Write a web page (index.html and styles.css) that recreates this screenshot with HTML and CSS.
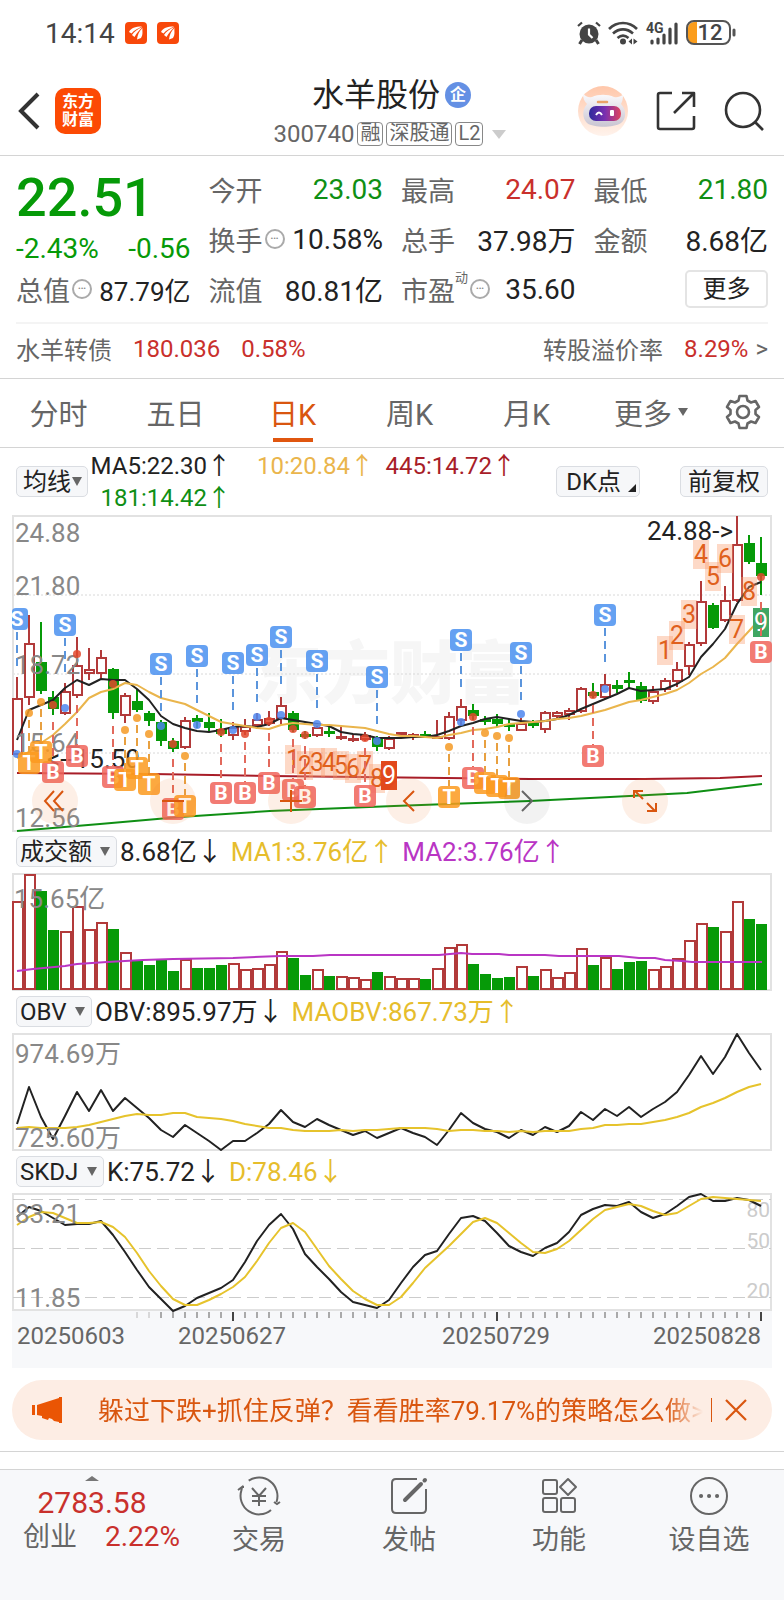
FILE: index.html
```html
<!DOCTYPE html>
<html lang="zh-CN">
<head>
  <meta charset="UTF-8" />
  <meta name="viewport" content="width=device-width, initial-scale=1" />
  <title>水羊股份 300740</title>
  <link rel="stylesheet" href="styles.css">
</head>
<body>

  <!-- Status bar -->
  <div class="status">
    <span class="clock">14:14</span>
    <svg class="app-dot" viewBox="0 0 22 22" aria-hidden="true">
      <rect width="22" height="22" rx="4" fill="#f8480a"/>
      <path d="M4 10C6 6 10 4.500 17 4.500C13 6.500 9 8 6.500 11.500Z M7 13C9 10 12 7 17.500 5C14.500 8 11.500 11 9.500 15Z M12 17.500C12.500 13 14 9 17.500 6C17 9 18.500 12 16 16Z" fill="#fff"/>
    </svg>
    <svg class="app-dot" viewBox="0 0 22 22" aria-hidden="true">
      <rect width="22" height="22" rx="4" fill="#f8480a"/>
      <path d="M4 10C6 6 10 4.500 17 4.500C13 6.500 9 8 6.500 11.500Z M7 13C9 10 12 7 17.500 5C14.500 8 11.500 11 9.500 15Z M12 17.500C12.500 13 14 9 17.500 6C17 9 18.500 12 16 16Z" fill="#fff"/>
    </svg>
    <span class="spacer"></span>
    <svg width="24" height="24" viewBox="0 0 24 24" aria-hidden="true">
      <circle cx="12" cy="13" r="9.500" fill="#444"/>
      <path d="M1 5L5 1.500M23 5L19 1.500" stroke="#444" stroke-width="2.200" fill="none"/>
      <path d="M5 19L2.500 23M19 19L21.500 23" stroke="#444" stroke-width="3" fill="none"/>
      <path d="M12 7.500V13.500L15.500 17" stroke="#fff" stroke-width="2.200" fill="none"/>
    </svg>
    <svg width="30" height="24" viewBox="0 0 30 24" aria-hidden="true">
      <g fill="none" stroke="#444" stroke-width="2.600">
        <path d="M1 8C9 0 21 0 29 8"/>
        <path d="M5 12.500C11 7 19 7 25 12.500"/>
        <path d="M9.500 17C13 14 17 14 20.500 17"/>
      </g>
      <circle cx="15" cy="20.500" r="3" fill="#444"/>
      <path d="M20.500 20.500L24 17.500V23.500ZM25.500 17.500L29.500 20.500L25.500 23.500Z" fill="#444"/>
    </svg>
    <svg class="signal" width="34" height="24" viewBox="0 0 34 24" aria-hidden="true">
      <text x="1" y="12" class="net">4G</text>
      <path d="M7 20V22M13 18V22M19 14V22M25 8V22M31 3V22" stroke="#444" stroke-width="3.200" stroke-linecap="round" fill="none"/>
    </svg>
    <svg width="50" height="26" viewBox="0 0 50 26" aria-hidden="true">
      <path d="M8 2H11V24H8A6 6 0 0 1 2 18V8A6 6 0 0 1 8 2Z" fill="#fb9d1c"/>
      <rect x="1" y="1" width="43" height="23" rx="7" fill="none" stroke="#555" stroke-width="2"/>
      <path d="M48 10V15" stroke="#555" stroke-width="3" stroke-linecap="round"/>
      <text x="24" y="20" class="batt">12</text>
    </svg>
  </div>

  <!-- Header -->
  <header class="top">
    <div class="top-left">
      <button class="plain" type="button" aria-label="返回">
        <svg width="24" height="38" viewBox="0 0 24 38"><path d="M22 2L5 19L22 36" fill="none" stroke="#333" stroke-width="4"/></svg>
      </button>
      <a href="#" class="logo" aria-label="东方财富"><span>东方</span><span>财富</span></a>
    </div>
    <div class="top-title">
      <h1>水羊股份<span class="corp">企</span></h1>
      <p class="code">300740<span class="tag">融</span><span class="tag">深股通</span><span class="tag">L2</span><i class="tri tri-light"></i></p>
    </div>
    <div class="top-right">
      <button class="plain" type="button" aria-label="智能助手">
        <svg width="50" height="50" viewBox="0 0 50 50">
          <defs>
            <linearGradient id="halo" x1="0" y1="0" x2="0" y2="1"><stop offset="0" stop-color="#ffc7aa"/><stop offset="1" stop-color="#fff3ec"/></linearGradient>
            <linearGradient id="shell" x1="0" y1="0" x2="0" y2="1"><stop offset="0" stop-color="#fbfafc"/><stop offset="1" stop-color="#c9c5d2"/></linearGradient>
            <linearGradient id="visor" x1="0" y1="0" x2="1" y2="0"><stop offset="0" stop-color="#2d2a9c"/><stop offset=".5" stop-color="#7a2fb0"/><stop offset="1" stop-color="#e0445c"/></linearGradient>
          </defs>
          <circle cx="25" cy="25" r="25" fill="url(#halo)"/>
          <path d="M5 8C8 10 10 12 14 11C20 8 30 8 36 11C40 12 42 10 45 9C45 14 44 16 43 18C49 24 48 34 43 37C35 42 16 42 9 37C4 32 4 24 9 18C6 15 5 12 5 8Z" fill="url(#shell)"/>
          <path d="M20 16H29" stroke="#e9a268" stroke-width="2.500" stroke-linecap="round"/>
          <rect x="11" y="20" width="32" height="15" rx="7" fill="url(#visor)"/>
          <path d="M18 29Q21 24 24 29" fill="none" stroke="#fff" stroke-width="2"/>
          <rect x="32" y="24" width="4" height="6" rx="1" fill="#fff"/>
        </svg>
      </button>
      <button class="plain" type="button" aria-label="分享">
        <svg width="40" height="40" viewBox="0 0 40 40" fill="none" stroke="#333" stroke-width="2.600" stroke-linejoin="round">
          <path d="M16 2H4Q2 2 2 4V36Q2 38 4 38H36Q38 38 38 36V25"/><path d="M18 22L38 2M26 2H38V16"/>
        </svg>
      </button>
      <button class="plain" type="button" aria-label="搜索">
        <svg width="40" height="40" viewBox="0 0 40 40" fill="none" stroke="#333" stroke-width="2.600"><circle cx="19" cy="19" r="17"/><path d="M31 31L39 39"/></svg>
      </button>
    </div>
  </header>

  <!-- Quote -->
  <section class="quote" aria-label="行情">
    <div class="quote-grid">
      <div class="price-box">
        <strong class="price">22.51</strong>
        <div class="change"><span>-2.43%</span><span>-0.56</span></div>
      </div>
      <div class="cell"><span class="k">今开</span><span class="v green">23.03</span></div>
      <div class="cell"><span class="k">最高</span><span class="v red">24.07</span></div>
      <div class="cell"><span class="k">最低</span><span class="v green">21.80</span></div>
      <div class="cell"><span class="k">换手<i class="more-dot">•••</i></span><span class="v">10.58%</span></div>
      <div class="cell"><span class="k">总手</span><span class="v">37.98万</span></div>
      <div class="cell"><span class="k">金额</span><span class="v">8.68亿</span></div>
      <div class="cell"><span class="k">总值<i class="more-dot">•••</i></span><span class="v v-fit">87.79亿</span></div>
      <div class="cell"><span class="k">流值</span><span class="v">80.81亿</span></div>
      <div class="cell"><span class="k">市盈<sup>动</sup><i class="more-dot">•••</i></span><span class="v">35.60</span></div>
      <div class="cell cell-end"><button class="more-btn" type="button">更多</button></div>
    </div>
    <a class="bond" href="#">
      <span>水羊转债</span><span class="red">180.036</span><span class="red">0.58%</span>
      <span class="bond-right">转股溢价率</span><span class="red">8.29%</span><span class="gt">&gt;</span>
    </a>
  </section>

  <!-- Period tabs -->
  <nav class="tabs" aria-label="周期">
    <button type="button">分时</button>
    <button type="button">五日</button>
    <button type="button" class="on">日K</button>
    <button type="button">周K</button>
    <button type="button">月K</button>
    <button type="button" class="tab-more">更多<i class="tri tri-small"></i></button>
    <button type="button" class="tab-gear" aria-label="设置">
      <svg width="36" height="36" viewBox="0 0 36 36" fill="none" stroke="#666" stroke-width="2.600" stroke-linejoin="round">
        <path d="M14.500 2H21.500L22.500 6.500L26 8.500L30.500 7L34 13L30.500 16V20L34 23L30.500 29L26 27.500L22.500 29.500L21.500 34H14.500L13.500 29.500L10 27.500L5.500 29L2 23L5.500 20V16L2 13L5.500 7L10 8.500L13.500 6.500Z"/>
        <circle cx="18" cy="18" r="6"/>
      </svg>
    </button>
  </nav>

  <main class="charts">
    <div class="ma-row">
      <label class="pick pick-tight"><select aria-label="主图指标"><option>均线</option></select></label>
      <div class="ma-list">
        <span>MA5:22.30↑</span>
        <span class="amber">10:20.84↑</span>
        <span class="crimson">445:14.72↑</span>
        <span class="green">181:14.42↑</span>
      </div>
      <button class="chip chip-dk" type="button">DK点<i class="corner"></i></button>
      <button class="chip" type="button">前复权</button>
    </div>

    <div class="kline">
      <svg id="kChart" class="chart" viewBox="0 0 760 315" role="img" aria-label="日K线图"></svg>
      <div class="tools">
        <button type="button" aria-label="最早"><svg viewBox="0 0 46 46"><path d="M22 13L13 23L22 33M31 13L22 23L31 33"/></svg></button>
        <button type="button" aria-label="缩小"><svg viewBox="0 0 46 46"><path d="M12 23H34"/></svg></button>
        <button type="button" aria-label="放大"><svg viewBox="0 0 46 46"><path d="M12 23H34M23 12V34"/></svg></button>
        <button type="button" aria-label="左移"><svg viewBox="0 0 46 46"><path d="M28 13L18 23L28 33"/></svg></button>
        <button type="button" aria-label="右移" class="off"><svg viewBox="0 0 46 46"><path d="M18 13L28 23L18 33"/></svg></button>
        <button type="button" aria-label="全屏"><svg viewBox="0 0 46 46"><path d="M21 21L13 13M12 20V13H21M25 25L33 33M34 25V33H25"/></svg></button>
      </div>
    </div>

    <div class="ind-row">
      <label class="pick"><select aria-label="副图一"><option>成交额</option></select></label>
      <span>8.68亿↓</span><span class="yellow">MA1:3.76亿↑</span><span class="purple">MA2:3.76亿↑</span>
    </div>
    <svg id="volChart" class="chart" viewBox="0 0 760 117" role="img" aria-label="成交额"></svg>

    <div class="ind-row">
      <label class="pick"><select aria-label="副图二"><option>OBV</option></select></label>
      <span>OBV:895.97万↓</span><span class="yellow">MAOBV:867.73万↑</span>
    </div>
    <svg id="obvChart" class="chart" viewBox="0 0 760 117" role="img" aria-label="OBV"></svg>

    <div class="ind-row">
      <label class="pick"><select aria-label="副图三"><option>SKDJ</option></select></label>
      <span>K:75.72↓</span><span class="yellow">D:78.46↓</span>
    </div>
    <svg id="kdjChart" class="chart" viewBox="0 0 760 117" role="img" aria-label="SKDJ"></svg>
    <svg id="axis" class="chart axis" viewBox="0 0 760 57" role="img" aria-label="日期"></svg>
  </main>

  <!-- Promo strip -->
  <aside class="promo">
    <svg width="32" height="28" viewBox="0 0 32 28" aria-hidden="true"><path d="M1 9H4V19H1ZM6 9L28 2V1H31V27H28V26L23 25L21 23L18 22L17 24L11 22V20L6 19Z" fill="#ea5504"/></svg>
    <a href="#">躲过下跌+抓住反弹？看看胜率79.17%的策略怎么做&gt;</a>
    <button class="plain" type="button" aria-label="关闭"><svg width="24" height="24" viewBox="0 0 24 24"><path d="M2 2L22 22M22 2L2 22" stroke="#d9560f" stroke-width="2.200"/></svg></button>
  </aside>

  <!-- Bottom bar -->
  <footer class="dock">
    <a href="#" class="index">
      <svg width="14" height="5" viewBox="0 0 14 5" aria-hidden="true"><path d="M0 5L7 0L14 5Z" fill="#777"/></svg>
      <span class="index-num">2783.58</span>
      <span class="index-sub"><span class="index-name">创业</span><span>2.22%</span></span>
    </a>
    <a href="#" class="dock-item">
      <svg viewBox="0 0 44 40"><path d="M11.700 4.700A18.500 18.500 0 0 1 39.500 26M37 26L40 28L43 26M34 34A18.500 18.500 0 0 1 4.500 14L5 11L1 14M5 11L7 11M15 12L22 20L29 12M22 20V30M15 20H29M15 25H29"/></svg>
      <span>交易</span>
    </a>
    <a href="#" class="dock-item">
      <svg viewBox="0 0 44 40"><path d="M30 3H9Q5 3 5 7V33Q5 37 9 37H35Q39 37 39 33V13"/><path d="M18 24L34 8M37.500 4.500L38 4" stroke-width="4" stroke-linecap="round"/></svg>
      <span>发帖</span>
    </a>
    <a href="#" class="dock-item">
      <svg viewBox="0 0 44 40"><rect x="6" y="4" width="14" height="14" rx="2"/><rect x="6" y="22" width="14" height="14" rx="2"/><rect x="24" y="22" width="14" height="14" rx="2"/><path d="M31 3L39 11L31 19L23 11Z" stroke-linejoin="round"/></svg>
      <span>功能</span>
    </a>
    <a href="#" class="dock-item">
      <svg viewBox="0 0 44 40"><circle cx="22" cy="20" r="18"/><path d="M14 20H14.100M22 20H22.100M30 20H30.100" stroke-width="4" stroke-linecap="round"/></svg>
      <span>设自选</span>
    </a>
  </footer>

  <script src="chart.js"></script>
</body>
</html>
```
FILE: styles.css
```css
/* Base */
* {
  box-sizing: border-box;
}

body {
  margin: 0;
  font-family: Roboto, "Noto Sans CJK SC", sans-serif;
  color: #222;
  background: #fff;
}

button,
select {
  font: inherit;
  color: inherit;
  background: none;
  border: none;
  padding: 0;
  cursor: pointer;
}

a {
  color: inherit;
  text-decoration: none;
}

i {
  font-style: normal;
}

.plain {
  display: flex;
}

.spacer {
  flex: 1;
}

.red { color: #c9302c; }
.green { color: #0f8f14; }
.amber { color: #eab54c; }
.crimson { color: #a81d28; }
.yellow { color: #e6bd2c; }
.purple { color: #b935c4; }

/* Down triangle */
.tri {
  border: 6px solid transparent;
  border-top: 9px solid #666;
  border-bottom: 0;
}

.tri-light {
  border-width: 9px 7px 0;
  border-top-color: #ccc;
  margin-left: 6px;
}

.tri-small {
  border-width: 8px 5px 0;
  margin-left: 6px;
}

/* Status bar */
.status {
  display: flex;
  align-items: center;
  height: 66px;
  padding: 0 48px 0 45px;
  gap: 7px;
}

.clock {
  font-size: 28px;
  color: #444;
  margin-right: 3px;
}

.app-dot {
  width: 22px;
  height: 22px;
  margin-right: 3px;
}

.signal {
  overflow: visible;
}

.net {
  font-size: 14px;
  font-weight: 700;
  fill: #444;
}

.batt {
  font-size: 22px;
  font-weight: 500;
  fill: #444;
  text-anchor: middle;
}

/* Header */
.top {
  display: grid;
  grid-template-columns: 1fr auto 1fr;
  height: 90px;
  padding: 0 20px 0 16px;
  border-bottom: 1px solid #d4d4d4;
}

.top-left,
.top-right {
  display: flex;
  align-items: center;
  gap: 15px;
}

.top-right {
  justify-content: flex-end;
  gap: 28px;
}

.logo {
  width: 46px;
  height: 46px;
  border-radius: 10px;
  background: #fc4a04;
  color: #fff;
  font-size: 16px;
  line-height: 18px;
  font-weight: 700;
  display: flex;
  flex-direction: column;
  align-items: center;
  justify-content: center;
}

.top-title {
  text-align: center;
}

.top-title h1 {
  display: flex;
  align-items: center;
  justify-content: center;
  gap: 5px;
  margin: 9px 0 0;
  padding-left: 3px;
  font-size: 32px;
  line-height: 40px;
  font-weight: 400;
}

.corp {
  width: 26px;
  height: 26px;
  border-radius: 50%;
  background: #6490e4;
  color: #fff;
  font-size: 16px;
  line-height: 25px;
  font-weight: 700;
}

.code {
  display: flex;
  align-items: center;
  justify-content: center;
  gap: 3px;
  margin: 6px 0 0;
  font-size: 24px;
  line-height: 26px;
  color: #666;
}

.tag {
  height: 24px;
  padding: 0 2px;
  border: 1px solid #888;
  border-radius: 4px;
  font-size: 20px;
  line-height: 21px;
}

/* Quote */
.quote {
  padding: 8px 16px 0;
  border-bottom: 1px solid #d4d4d4;
}

.quote-grid {
  display: grid;
  grid-template-columns: repeat(4, 1fr);
  grid-auto-rows: 50px;
  column-gap: 18px;
  padding-bottom: 8px;
  border-bottom: 2px solid #f4f4f4;
}

.price-box {
  grid-row: span 2;
  color: #069a08;
}

.price {
  display: block;
  font-size: 54px;
  line-height: 68px;
  font-weight: 500;
}

.change {
  display: flex;
  justify-content: space-between;
  font-size: 28px;
  line-height: 34px;
}

.cell {
  display: flex;
  align-items: center;
  justify-content: space-between;
  font-size: 28px;
  white-space: nowrap;
}

.cell-end {
  justify-content: flex-end;
}

.k {
  display: flex;
  align-items: center;
  font-size: 27px;
  color: #666;
}

.k sup {
  font-size: 13px;
  align-self: flex-start;
  line-height: 16px;
}

.v-fit {
  font-size: 26px;
}

.more-dot {
  width: 20px;
  height: 20px;
  margin-left: 2px;
  border: 2px solid #aaa;
  border-radius: 50%;
  font-size: 8px;
  line-height: 16px;
  text-align: center;
  color: #888;
}

.more-btn {
  width: 83px;
  height: 38px;
  border: 2px solid #e4e4e4;
  border-radius: 5px;
  font-size: 24px;
  line-height: 30px;
}

.bond {
  display: flex;
  align-items: center;
  height: 54px;
  padding-bottom: 5px;
  gap: 21px;
  font-size: 24px;
  color: #666;
}

.bond-right {
  margin-left: auto;
}

.gt {
  margin-left: -14px;
}

/* Tabs */
.tabs {
  display: flex;
  height: 69px;
  border-bottom: 1px solid #d4d4d4;
}

.tabs button {
  flex: 117;
  display: flex;
  align-items: center;
  justify-content: center;
  font-size: 29px;
  color: #666;
  border-top: 3px solid transparent;
  border-bottom: 5px solid transparent;
}

.tabs .on {
  color: #d9560f;
  background: linear-gradient(#e0560f, #e0560f) center bottom / 40px 4px no-repeat;
}

.tabs .tab-more {
  flex: 132;
}

.tabs .tab-gear {
  flex: 67;
  justify-content: flex-start;
}

.tab-gear svg {
  margin-left: 8px;
}

/* Charts */
.charts {
  padding: 0 12px;
}

.chart {
  display: block;
  width: 100%;
  height: auto;
  overflow: visible;
}

.axis {
  background: #f7f8fa;
}

.ma-row {
  display: flex;
  align-items: flex-start;
  height: 68px;
  padding: 18px 4px 0 4px;
}

.ma-list {
  flex: 1;
  display: grid;
  grid-template-columns: 143px 143px 142px;
  justify-items: end;
  margin-top: -16px;
  font-size: 24px;
  line-height: 32px;
  white-space: nowrap;
}

.chip,
.pick {
  display: flex;
  align-items: center;
  height: 31px;
  padding: 0 7px;
  border: 1px solid #dadde2;
  border-radius: 5px;
  background: #f6f7f9;
  font-size: 24px;
  line-height: 28px;
}

.chip-dk {
  padding: 0 3px 0 9px;
  gap: 7px;
  margin-right: 40px;
}

.corner {
  align-self: flex-end;
  margin-bottom: 4px;
  border-left: 8px solid transparent;
  border-bottom: 8px solid #222;
}

.pick {
  padding: 0 6px 0 3px;
  gap: 8px;
  cursor: pointer;
}

.pick select {
  appearance: none;
  outline-offset: 2px;
}

.pick::after {
  content: "";
  border: 5px solid transparent;
  border-top: 9px solid #666;
  border-bottom: 0;
}

.pick-tight {
  padding: 0 5px 0 6px;
  gap: 1px;
}

.ind-row {
  display: flex;
  align-items: center;
  height: 43px;
  padding: 0 0 2px 4px;
  gap: 3px;
  font-size: 26px;
  line-height: 30px;
  white-space: nowrap;
}

.ind-row span + span {
  margin-left: 5px;
}

.kline {
  position: relative;
}

.tools {
  position: absolute;
  left: 20px;
  right: 104px;
  bottom: 7px;
  display: flex;
  justify-content: space-between;
}

.tools button {
  width: 46px;
  height: 46px;
  border-radius: 50%;
  background: rgba(240, 120, 50, 0.12);
}

.tools svg {
  display: block;
  fill: none;
  stroke: #d9560f;
  stroke-width: 2;
}

.tools .off {
  background: rgba(0, 0, 0, 0.05);
}

.tools .off svg {
  stroke: #666;
}

/* Things drawn by chart.js */
.frame { fill: none; stroke: #e2e2e2; stroke-width: 2; }
.grid { stroke: #d8d8d8; stroke-width: 1; stroke-dasharray: 2 2; }
.level { stroke: #ccc; stroke-width: 1; stroke-dasharray: 12 6; }
.mark { fill: #f6f6f6; font-size: 68px; font-weight: 900; text-anchor: middle; }
.ylab { fill: #888; font-size: 26px; }
.lvlab { fill: #ccc; font-size: 21px; text-anchor: end; }
.note { fill: #222; font-size: 26px; text-anchor: end; }
.date { fill: #666; font-size: 24px; }
.up { fill: #fff; stroke: #b23a3a; stroke-width: 2; }
.down { fill: #069a08; stroke: #069a08; stroke-width: 2; }
.line { fill: none; stroke-width: 2; stroke-linejoin: round; }
.l-black { stroke: #222; }
.l-amber { stroke: #eab54c; }
.l-yellow { stroke: #e6c32c; }
.l-purple { stroke: #b935c4; }
.l-crimson { stroke: #a81d28; }
.l-green { stroke: #0f8f14; }
.sig { font-size: 21px; font-weight: 700; text-anchor: middle; fill: #fff; }
.stem { stroke-width: 2; stroke-dasharray: 8 5; }
.seq { font-size: 25px; text-anchor: middle; fill: #e0601c; }
.seq-end { fill: #fff; }

/* Promo strip */
.promo {
  display: flex;
  align-items: center;
  height: 60px;
  margin: 12px 12px 11px;
  padding: 0 24px 0 19px;
  border-radius: 30px;
  background: #fdede4;
  color: #d9560f;
  font-size: 26px;
}

.promo a {
  flex: 1;
  margin-left: 35px;
  padding-bottom: 4px;
  overflow: hidden;
  white-space: nowrap;
  -webkit-mask-image: linear-gradient(90deg, #000 94%, transparent);
  mask-image: linear-gradient(90deg, #000 94%, transparent);
}

.promo .plain {
  margin-left: 8px;
  padding-left: 12px;
  border-left: 1px solid #d9560f;
}

/* Bottom bar */
.dock {
  display: flex;
  min-height: 149px;
  padding-top: 7px;
  background: linear-gradient(#fff 17px, #d4d4d4 17px, #d4d4d4 18px, #f7f8fa 18px);
  border-top: 1px solid #d4d4d4;
}

.index {
  flex: 184;
  display: flex;
  flex-direction: column;
  align-items: center;
  padding-top: 17px;
  color: #c9302c;
}

.index-num {
  margin-top: 5px;
  font-size: 30px;
  line-height: 34px;
}

.index-sub {
  display: flex;
  gap: 28px;
  padding-left: 19px;
  font-size: 28px;
  line-height: 34px;
}

.index-name {
  font-size: 27px;
  color: #666;
}

.dock-item {
  flex: 150;
  display: flex;
  flex-direction: column;
  align-items: center;
  padding-top: 17px;
  font-size: 27px;
  line-height: 48px;
  color: #666;
}

.dock-item svg {
  width: 44px;
  height: 40px;
  fill: none;
  stroke: #666;
  stroke-width: 2;
}
```
FILE: chart.js
```js
// One trading day every 12 units, first one at 5
const STEP = 12;
const X0 = 5;
const x = i => X0 + i * STEP;

// u = up day, d = down day; then high, body top, body bottom, low
const candles = [
  ['u',161,182,239,239],['u',99,127,182,189],['d',106,146,175,178],['d',175,181,193,199],
  ['u',167,175,198,199],['u',121,149,180,182],['u',132,153,158,164],['u',134,141,158,162],
  ['d',152,153,197,203],['u',177,179,200,207],['d',173,185,194,196],['d',195,197,205,210],
  ['d',204,206,225,230],['d',222,225,233,236],['u',201,204,232,233],['d',199,202,206,212],
  ['d',197,206,212,216],['d',203,213,218,221],['u',206,211,220,224],['u',203,210,216,219],
  ['u',197,203,210,213],['u',195,202,208,210],['u',181,189,203,208],['d',195,197,214,216],
  ['d',215,218,220,223],['u',207,211,220,221],['d',211,215,218,221],['u',211,220,222,224],
  ['u',219,222,223,226],['u',216,219,224,225],['d',220,222,231,235],['u',220,222,233,234],
  ['u',216,216,220,220],['u',217,218,220,224],['d',215,218,220,222],['u',204,220,222,222],
  ['u',196,200,223,224],['u',183,190,205,209],['d',188,194,200,204],['d',200,203,206,209],
  ['d',198,203,208,211],['d',203,208,210,215],['u',202,207,215,215],['d',204,207,208,212],
  ['u',195,196,214,217],['u',195,196,201,204],['u',192,194,199,204],['u',171,172,196,197],
  ['d',167,176,180,182],['u',158,168,182,183],['d',164,169,173,177],['d',156,164,166,173],
  ['d',166,170,185,187],['u',170,175,186,188],['u',162,164,174,176],['u',146,153,166,171],
  ['u',126,128,151,159],['u',65,85,128,130],['d',87,89,112,113],['u',70,84,105,106],
  ['u',0,28,85,86],['d',19,27,46,48],['d',21,47,60,79]
];

const ma5 = [224,194,189,184,172,164,169,163,164,164,173,184,200,208,212,215,216,214,211,210,211,
  208,202,204,206,208,210,216,218,219,222,222,222,221,221,219,215,210,207,203,201,203,205,
  206,205,203,199,193,188,183,178,172,175,174,173,168,161,141,128,113,88,71,66];
const ma10 = [242,236,227,219,208,196,182,176,173,167,169,176,182,185,188,194,200,206,208,210,212,
  213,209,207,208,209,209,210,211,212,215,218,220,220,221,222,219,217,214,213,211,208,207,
  206,205,203,202,200,197,194,190,186,184,181,178,174,167,158,151,142,128,115,102];

const volume = [89,116,99,60,59,84,61,68,61,38,30,25,30,19,31,22,22,25,27,21,22,26,39,32,15,21,14,14,13,
  11,18,14,12,12,11,22,43,46,26,16,12,13,24,14,21,13,18,42,25,33,21,28,29,21,24,32,50,67,63,59,89,71,66];

const obv = [90,53,83,105,82,58,77,56,77,64,74,84,96,103,91,99,107,116,107,107,99,90,76,88,93,85,91,96,101,
  97,104,99,94,99,103,111,96,79,89,95,98,104,96,101,93,98,92,78,86,75,82,73,83,75,68,58,41,22,40,23,0,19,36];
const maobv = [94,93,94,94,94,93,91,88,85,82,80,81,81,79,79,83,84,85,87,90,92,94,94,96,97,97,97,96,97,
  96,96,95,94,94,94,95,97,96,96,97,97,98,97,98,97,97,97,95,94,91,91,90,90,88,86,83,79,73,69,64,58,53,50];

const kLine = [23,13,17,24,31,30,30,27,41,58,76,93,105,117,112,104,99,94,86,68,47,31,20,35,60,73,85,98,108,
  111,114,106,89,73,61,57,40,24,22,27,39,52,58,62,54,49,38,21,15,11,12,8,18,24,20,12,3,0,7,7,4,6,12];
const dLine = [31,23,18,19,24,29,29,28,33,43,59,77,92,105,111,111,106,100,93,83,67,49,34,29,38,55,72,85,97,
  105,111,111,103,89,74,63,52,40,28,24,29,39,49,58,59,55,47,36,25,16,13,10,12,17,21,19,12,5,3,4,5,6,7];

// Signals: [day, badge centre, dot]
const sells = [[0,103,238],[4,109,192],[12,148,210],[15,140,209],[18,147,214],[20,139,201],
  [22,121,199],[25,145,208],[30,161,225],[37,124,206],[42,137,198],[49,99,173]];
const buys = [[3,256,189],[5,240,138],[8,261,168],[13,293,228],[17,277,216],[19,277,218],
  [21,267,205],[23,274,213],[24,281,219],[29,280,222],[38,262,201],[48,240,179],[62,136,61]];
const tees = [[1,197],[2,186],[9,214],[10,202],[11,218],[14,240],[36,231],[39,217],[40,220],[41,222]];

// Nine-count: [first day, badge centres, colour of the 9]
const counts = [
  [23, [243,249,246,246,249,252,249,262,259], '#e2481c'],
  [54, [134,119,98,38,60,42,113,75,106], '#3fa662']
];

const frame = h => `<rect class="frame" x="1" y="0" width="758" height="${h - 1}"/>`;
const text = (cls, tx, ty, s) => `<text class="${cls}" x="${tx}" y="${ty}">${s}</text>`;
const path = (cls, pts) => `<polyline class="line ${cls}" points="${pts.map(p => p.join()).join(' ')}"/>`;
const series = (cls, ys) => path(cls, ys.map((y, i) => [x(i), y]));

// The first badge is cut by the left edge of the chart
function badge(letter, color, i, cy) {
  const left = Math.max(x(i) - 11, 0);
  return `<rect x="${left}" y="${cy - 11}" width="${x(i) + 11 - left}" height="22" rx="4" fill="${color}" opacity=".85"/>` +
    text('sig', x(i), cy + 7, letter);
}

function stem(color, i, y1, y2) {
  return `<line class="stem" stroke="${color}" x1="${x(i)}" x2="${x(i)}" y1="${y1}" y2="${y2}"/>`;
}

function dot(color, i, cy) {
  return `<circle cx="${x(i)}" cy="${cy}" r="4" fill="${color}" opacity=".85"/>`;
}

function drawK() {
  let s = text('mark', 378, 182, '东方财富');
  [79, 158, 237].forEach(y => { s += `<line class="grid" x1="1" x2="759" y1="${y}" y2="${y}"/>`; });
  s += frame(316);

  candles.forEach(([dir, hi, top, bot, lo], i) => {
    const cls = dir === 'u' ? 'up' : 'down';
    s += `<line class="${cls}" x1="${x(i)}" x2="${x(i)}" y1="${hi}" y2="${lo}"/>`;
    s += `<rect class="${cls}" x="${x(i) - 4}" y="${top + 1}" width="9" height="${Math.max(bot - top - 2, 1)}"/>`;
  });

  s += path('l-crimson', [[5,257],[140,258],[260,260],[518,263],[632,263],[708,262],[750,260]]);
  s += path('l-green', [[5,315],[88,308],[168,301],[258,295],[382,290],[518,285],[598,281],[675,277],[750,268]]);
  s += series('l-black', ma5) + series('l-amber', ma10);

  const labels = [['24.88',26],['21.80',79],['18.72',158],['15.64',236],['12.56',311]];
  labels.forEach(([v, y]) => { s += text('ylab', 3, y, v); });
  s += text('note', 128, 252, '&lt;--15.50') + text('note', 721, 24, '24.88-&gt;');

  counts.forEach(([start, ys, last]) => ys.forEach((cy, n) => {
    const end = n === 8;
    const i = start + n;
    s += `<rect x="${x(i) - 8}" y="${cy - 14}" width="16" height="29" fill="${end ? last : '#f99a6c'}" opacity="${end ? 1 : 0.38}"/>`;
    s += text(end ? 'seq seq-end' : 'seq', x(i), cy + 9, n + 1);
  }));

  sells.forEach(([i, cy, dy]) => {
    s += stem('#5b95dc', i, cy + 13, cy + 50) + dot('#4d86ee', i, dy) + badge('S', '#4a90f0', i, cy);
  });
  buys.forEach(([i, cy, dy]) => {
    s += stem('#e2695c', i, candles[i][4] + 7, cy - 11) + dot('#e2482c', i, dy) + badge('B', '#f0645a', i, cy);
  });
  tees.forEach(([i, dy]) => {
    s += stem('#e8a040', i, dy + 7, dy + 39) + dot('#f59a24', i, dy) + badge('T', '#fb9a1e', i, dy + 50);
  });
  document.getElementById('kChart').innerHTML = s;
}

function drawVolume() {
  let s = frame(117);
  volume.forEach((h, i) => {
    const cls = candles[i][0] === 'u' ? 'up' : 'down';
    const w = cls === 'up' ? 10 : 9;
    s += `<rect class="${cls}" x="${x(i) - 4}" y="${117 - h}" width="${w}" height="${h - 2}"/>`;
  });
  s += path('l-purple', [[5,97],[21,95],[53,92],[65,90],[95,88],[131,86],[161,85],[221,84],[268,82],
    [301,82],[318,81],[427,81],[449,79],[460,80],[487,80],[497,81],[533,81],[547,82],[607,82],
    [627,84],[643,84],[653,86],[670,87],[680,88],[750,88]]);
  s += text('ylab', 2, 34, '15.65亿');
  document.getElementById('volChart').innerHTML = s;
}

function drawObv() {
  document.getElementById('obvChart').innerHTML = frame(117) +
    series('l-black', obv) + series('l-yellow', maobv) +
    text('ylab', 3, 29, '974.69万') + text('ylab', 3, 113, '725.60万');
}

function drawKdj() {
  let s = frame(117);
  [[5,23,80],[54,54,50],[103,104,20]].forEach(([y, base, v]) => {
    s += `<line class="level" x1="1" x2="759" y1="${y}.5" y2="${y}.5"/>` + text('lvlab', 758, base, v);
  });
  s += series('l-black', kLine) + series('l-yellow', dLine);
  s += text('ylab', 3, 29, '83.21') + text('ylab', 3, 113, '11.85');
  document.getElementById('kdjChart').innerHTML = s;
}

function drawAxis() {
  let s = '';
  for (let i = 10; i < candles.length; i++) {
    const big = i === 18 || i === 40 || i === 62;
    s += `<line x1="${x(i)}" x2="${x(i)}" y1="1" y2="${big ? 10 : 7}" stroke="${big ? '#444' : '#aaa'}" stroke-width="2" opacity="${i < 12 ? 0.4 : 1}"/>`;
  }
  [['20250603',5],['20250627',166],['20250729',430],['20250828',641]].forEach(([d, dx]) => {
    s += text('date', dx, 33, d);
  });
  document.getElementById('axis').innerHTML = s;
}

drawK();
drawVolume();
drawObv();
drawKdj();
drawAxis();
```
